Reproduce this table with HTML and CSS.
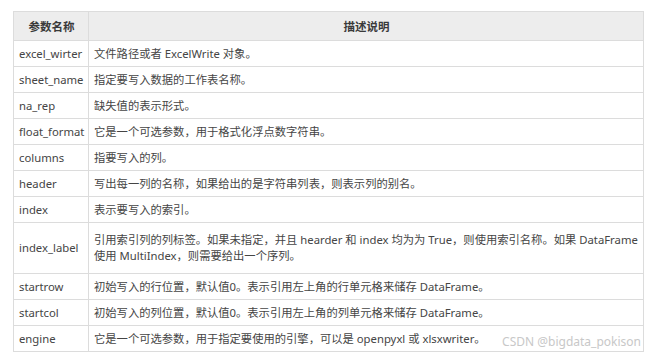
FILE: index.html
```html
<!DOCTYPE html>
<html lang="zh">
<head>
<meta charset="utf-8">
<link rel="stylesheet" href="styles.css">
</head>
<body>
<div class="page">
  <table class="params">
    <thead>
      <tr><th class="c1">参数名称</th><th class="c2">描述说明</th></tr>
    </thead>
    <tbody>
      <tr><td>excel_wirter</td><td>文件路径或者 ExcelWrite 对象。</td></tr>
      <tr><td>sheet_name</td><td>指定要写入数据的工作表名称。</td></tr>
      <tr><td>na_rep</td><td>缺失值的表示形式。</td></tr>
      <tr><td>float_format</td><td>它是一个可选参数，用于格式化浮点数字符串。</td></tr>
      <tr><td>columns</td><td>指要写入的列。</td></tr>
      <tr><td>header</td><td>写出每一列的名称，如果给出的是字符串列表，则表示列的别名。</td></tr>
      <tr><td>index</td><td>表示要写入的索引。</td></tr>
      <tr class="tall"><td>index_label</td><td>引用索引列的列标签。如果未指定，并且 hearder 和 index 均为为 True，则使用索引名称。如果 DataFrame 使用 MultiIndex，则需要给出一个序列。</td></tr>
      <tr><td>startrow</td><td>初始写入的行位置，默认值0。表示引用左上角的行单元格来储存 DataFrame。</td></tr>
      <tr><td>startcol</td><td>初始写入的列位置，默认值0。表示引用左上角的列单元格来储存 DataFrame。</td></tr>
      <tr><td>engine</td><td>它是一个可选参数，用于指定要使用的引擎，可以是 openpyxl 或 xlsxwriter。</td></tr>
    </tbody>
  </table>
  <div class="watermark">CSDN @bigdata_pokison</div>
</div>
</body>
</html>
```
FILE: styles.css
```css
html, body {
  margin: 0;
  padding: 0;
  background: #ffffff;
}
.page {
  position: relative;
  width: 650px;
  height: 355px;
  padding: 11px 0 0 13px;
  box-sizing: border-box;
}
.params {
  border-collapse: collapse;
  width: 631px;
  font-family: "Noto Sans", "Noto Sans CJK SC", sans-serif;
  font-size: 11.3px;
  color: #454545;
  table-layout: fixed;
}
.params th, .params td {
  border: 1px solid #dcdcdc;
  padding: 0 4px 0 5px;
  text-align: left;
  vertical-align: middle;
}
.params .c1 { width: 65px; }
.params th {
  background: #ededed;
  height: 28px;
  font-weight: bold;
  font-size: 11.5px;
  text-align: center;
  color: #3a3a3a;
}
.params td {
  height: 25px;
  line-height: 16px;
}
.params td:first-child {
  white-space: nowrap;
}
.params .tall td {
  height: 50px;
}
.watermark {
  position: absolute;
  right: 9px;
  bottom: 5px;
  font-family: "Noto Sans", sans-serif;
  font-size: 12px;
  color: #c8c8c8;
}
```
